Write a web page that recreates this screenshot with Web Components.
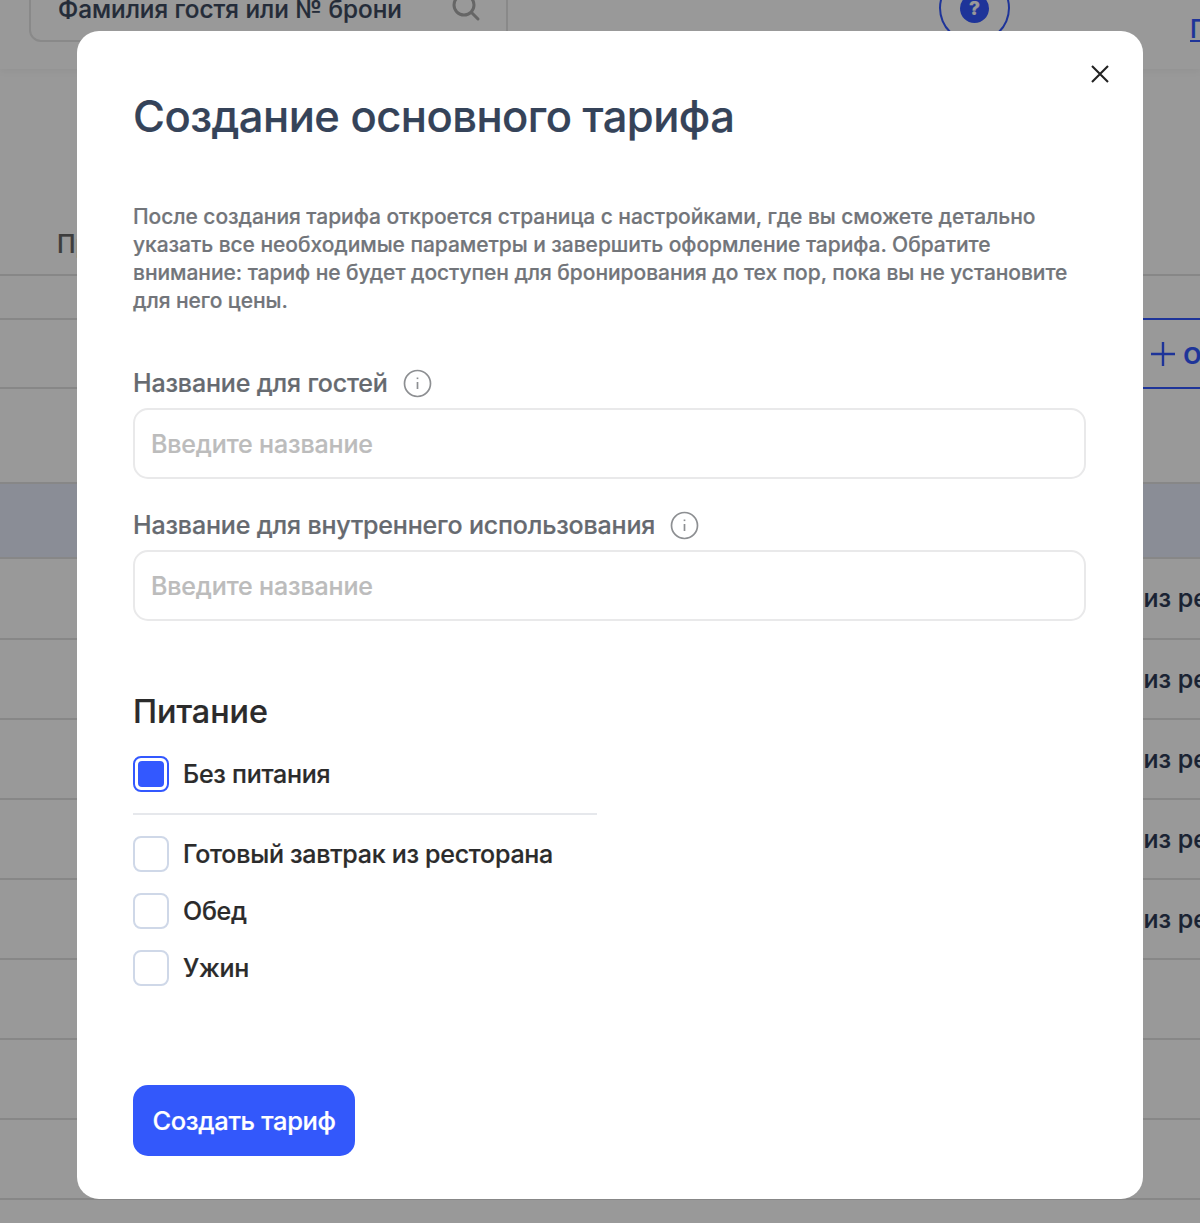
<!DOCTYPE html>
<html lang="ru"><head><meta charset="utf-8"><title>Создание основного тарифа</title>
<style>
html,body{margin:0;padding:0;width:1200px;height:1223px;overflow:hidden;background:#fff;font-family:Inter,"Noto Sans",sans-serif;-webkit-text-stroke:.2px currentColor}
</style></head><body>
<hotel-page>
  <page-header></page-header>
  <rate-table></rate-table>
</hotel-page>
<modal-overlay>
  <tariff-modal>
    <h-title slot="title">Создание основного тарифа</h-title>
    <p slot="intro">После создания тарифа откроется страница с настройками, где вы сможете детально<br>указать все необходимые параметры и завершить оформление тарифа. Обратите<br>внимание: тариф не будет доступен для бронирования до тех пор, пока вы не установите<br>для него цены.</p>
    <labeled-input slot="fields" label="Название для гостей" placeholder="Введите название"></labeled-input>
    <labeled-input slot="fields" label="Название для внутреннего использования" placeholder="Введите название"></labeled-input>
    <check-row slot="none" checked>Без питания</check-row>
    <check-row slot="meals">Готовый завтрак из ресторана</check-row>
    <check-row slot="meals">Обед</check-row>
    <check-row slot="meals">Ужин</check-row>
    <primary-button slot="action">Создать тариф</primary-button>
  </tariff-modal>
</modal-overlay>
<script>
function def(name, html, init){
  customElements.define(name, class extends HTMLElement{
    constructor(){super();const r=this.attachShadow({mode:'open'});r.innerHTML=typeof html==='function'?html(this):html;}
    connectedCallback(){if(init)init(this)}
  });
}
def('hotel-page',`<style>:host{display:block;width:1200px;height:1223px;overflow:hidden;background:#fff}</style><slot></slot>`);
def('page-header',`<style>
:host{display:flex;align-items:flex-end;height:95px;margin-top:-26px;padding:0 0 26px 29px;box-sizing:border-box;background:#fff;box-shadow:0 2px 8px rgba(0,0,0,.05);position:relative;white-space:nowrap;overflow:hidden}
.search{flex:none;display:flex;align-items:center;justify-content:space-between;box-sizing:border-box;width:479px;height:70px;margin-bottom:1px;padding:4px 25px 0 27px;border:2px solid #e4e4e4;border-radius:12px;color:#3c4a60;font-size:24.3px;font-weight:550}
.search svg{width:30px;height:30px;flex:none}
.help{flex:none;display:flex;align-items:center;justify-content:center;box-sizing:border-box;width:71px;height:70px;margin-left:431px;border:2px solid #3358ff;border-radius:50%}
.help b{display:flex;align-items:center;justify-content:center;width:29px;height:29px;border-radius:50%;background:#3358ff;color:#fff;font-size:19px;font-weight:800}
a{flex:none;margin-left:180px;margin-bottom:-1px;color:#3358ff;font-size:25px;font-weight:500;text-decoration:underline}
</style>
<div class="search"><span>Фамилия гостя или № брони</span><svg viewBox="0 0 30 30" fill="none" stroke="#aaa" stroke-width="3" stroke-linecap="round"><circle cx="13" cy="11" r="10"/><path d="M21 19l6 6"/></svg></div>
<div class="help"><b>?</b></div><a>П</a>`);
def('rate-table',()=>{
  let h=`<style>
:host{display:block;position:relative}
.row{box-sizing:border-box;border-bottom:2px solid #e2e2e2;display:flex;align-items:center;justify-content:flex-end;overflow:hidden;color:#2c3a55;font-size:25px;font-weight:550;white-space:nowrap}
.row span{width:56.5px;flex:none;margin-top:-1px}
.head{height:207px;padding-left:57px;justify-content:flex-start;align-items:flex-end;padding-bottom:15px;color:#666}
.hl{background:#e6ebfa}
.add{height:69px;overflow:visible;align-items:flex-start}
.add div{box-sizing:border-box;display:flex;align-items:center;gap:7px;width:57px;height:71px;margin-top:-2px;padding-bottom:2px;border:solid #3358ff;border-width:2px 0;color:#3358ff;font-size:31px;padding-left:7px}
.add svg{margin-top:2px}
</style>
<div class="row head">Пр</div><div class="row" style="height:44px"></div>
<div class="row add"><div><svg width="26" height="26" viewBox="0 0 26 26" style="flex:none" stroke="#3358ff" stroke-width="2.4"><path d="M13 1v24M1 13h24"/></svg>о</div></div>`;
  [95,75,81,80,80,80,80,80,80,80,80].forEach((n,i)=>{
    const t=i>=2&&i<=6?'<span>из ре</span>':'';
    h+=`<div class="row${i==1?' hl':''}" style="height:${n}px">${t}</div>`;
  });
  return h;
});
def('modal-overlay',`<style>:host{position:fixed;inset:0;background:rgba(0,0,0,.4);display:block;padding:31px 0 0 76.5px;box-sizing:border-box}</style><slot></slot>`);
def('h-title',`<style>:host{display:block;margin:0;font-size:43.5px;line-height:56px;font-weight:550;color:#354359;letter-spacing:-.52px}</style><slot></slot>`);
def('tariff-modal',`<style>
:host{display:block;position:relative;box-sizing:border-box;width:1066px;height:1168px;padding:57px 57px 0 56.5px;background:#fff;border-radius:22px}
.x{position:absolute;top:33.5px;right:33.5px;width:18px;height:18px}
.intro{margin:59px 0 0}
::slotted(p){margin:0;font-size:21px;line-height:28px;font-weight:550;color:#72757a;letter-spacing:-.05px;white-space:nowrap}
.fields{display:flex;flex-direction:column;gap:28px;margin-top:50px}
h2{margin:69px 0 0;font-size:32.3px;line-height:44px;font-weight:550;color:#2b2b2b}
.none{margin-top:22px}
hr{width:464px;height:2px;border:0;background:#e6e8ec;margin:21px 0 21px}
.meals{display:flex;flex-direction:column;gap:21px}
.act{margin-top:99px}
</style>
<svg class="x" viewBox="0 0 18 18" stroke="#222" stroke-width="2.1" fill="none"><path d="M1 1l16 16M17 1L1 17"/></svg>
<slot name="title"></slot>
<div class="intro"><slot name="intro"></slot></div>
<div class="fields"><slot name="fields"></slot></div>
<h2>Питание</h2>
<div class="none"><slot name="none"></slot></div>
<hr>
<div class="meals"><slot name="meals"></slot></div>
<div class="act"><slot name="action"></slot></div>`);
def('labeled-input',e=>`<style>
:host{display:block}
.l{display:flex;align-items:center;gap:15px;height:36px;margin-bottom:7px;font-size:25px;font-weight:550;color:#666a70;letter-spacing:-.17px}
.i{box-sizing:border-box;height:71px;border:2px solid #e9e9ea;border-radius:15px;display:flex;align-items:center;padding-left:16px;font-size:25px;font-weight:550;color:#bcbcbc;letter-spacing:-.15px}
svg{width:29px;height:29px;flex:none}
</style>
<div class="l"><span>${e.getAttribute('label')}</span><svg viewBox="0 0 29 29" fill="none" stroke="#8d8f92" stroke-width="1.7"><circle cx="14.5" cy="14.5" r="13"/><path d="M14.5 13v7"/><path d="M14.5 8.5v1.6"/></svg></div>
<div class="i">${e.getAttribute('placeholder')}</div>`);
def('check-row',e=>`<style>
:host{display:flex;align-items:center;gap:14px;height:36px;font-size:25px;font-weight:550;color:#2b2b2b;letter-spacing:-.27px}
.b{box-sizing:border-box;width:36px;height:36px;border-radius:8px;border:2px solid ${e.hasAttribute('checked')?'#3358ff':'#cfd8e8'};padding:3px;background:#fff}
.b i{display:block;width:100%;height:100%;border-radius:4px;background:${e.hasAttribute('checked')?'#3358ff':'transparent'}}
</style><div class="b"><i></i></div><span><slot></slot></span>`);
def('primary-button',`<style>
:host{display:inline-flex;align-items:center;justify-content:center;box-sizing:border-box;width:222px;height:71px;border-radius:15px;background:#3358fb;color:#fff;font-size:25.5px;font-weight:550;letter-spacing:-.35px}
</style><slot></slot>`);
</script>
</body></html>
